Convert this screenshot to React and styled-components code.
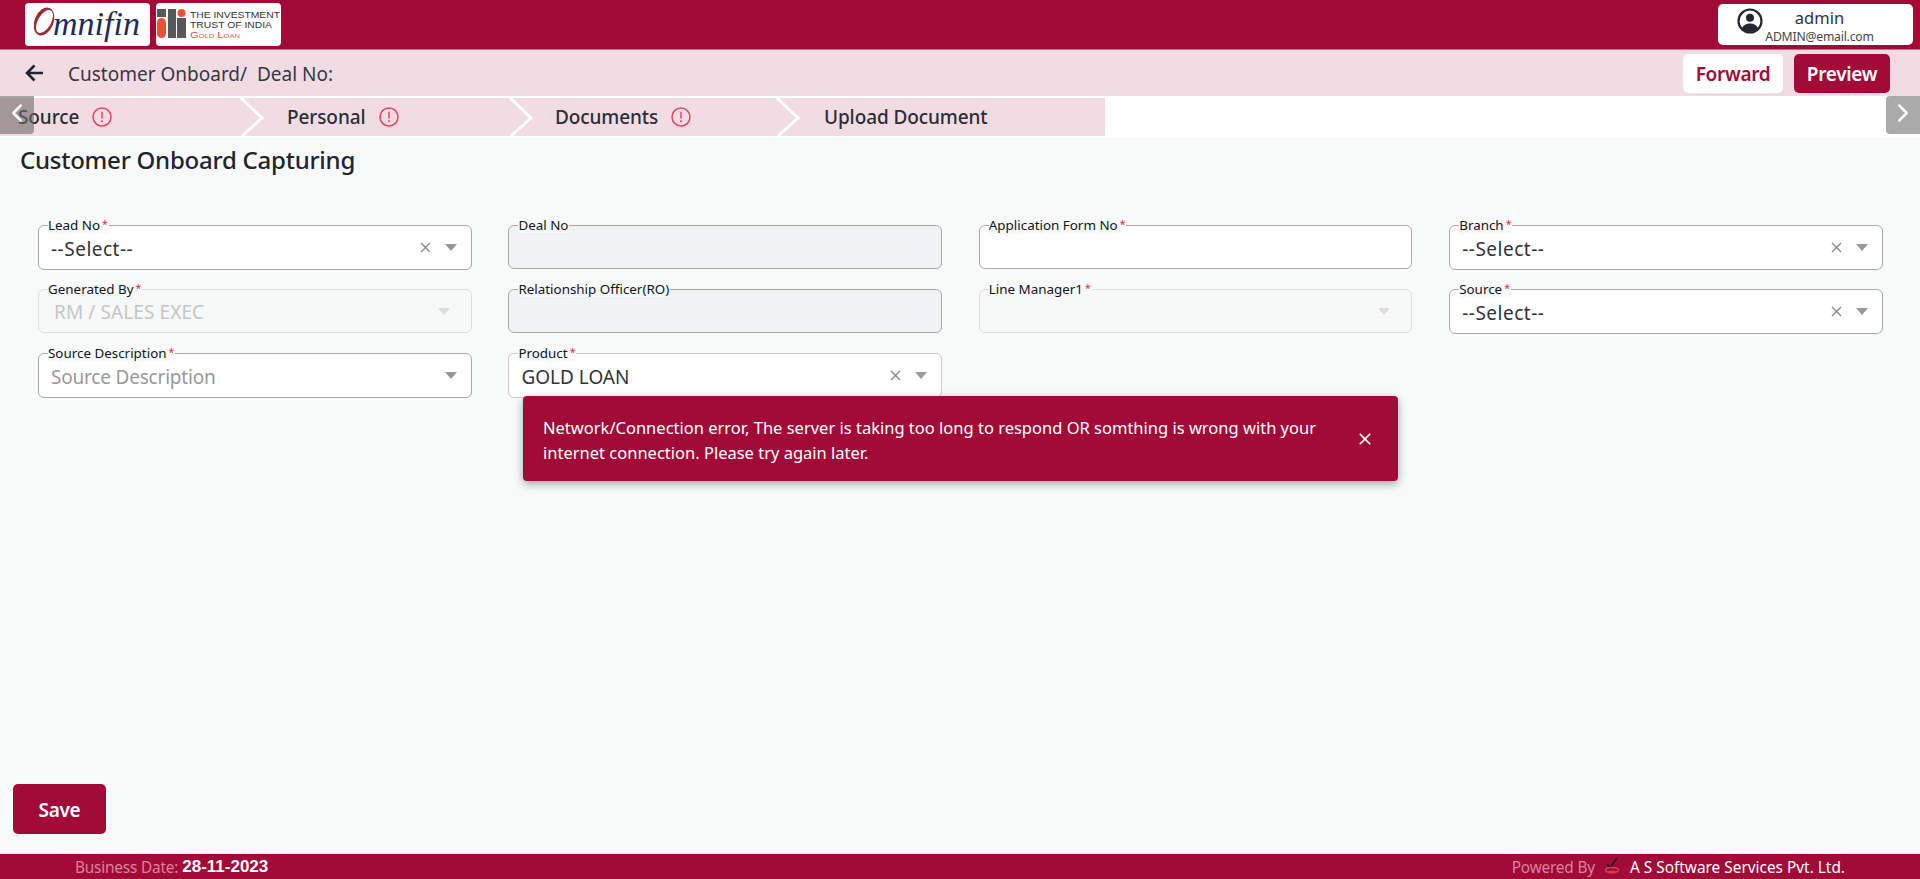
import React from "react";
import styled, { createGlobalStyle } from "styled-components";
import { MdClose } from "react-icons/md";
import { LuChevronLeft, LuChevronRight } from "react-icons/lu";

const maroon = "#a20a38";
const pink = "#f2dce3";
const UI = `"Noto Sans", "Open Sans", sans-serif`;

const Global = createGlobalStyle`
  * { box-sizing: border-box; }
  html, body { margin: 0; padding: 0; background: #f8fafa; }
  body { font-family: ${UI}; overflow: hidden; }
`;

const Page = styled.div`
  position: relative;
  height: 879px;
  display: flex;
  flex-direction: column;
  background: #f8fafa;
`;

const Header = styled.header`
  height: 50px;
  flex: none;
  background: ${maroon};
  border-bottom: 1px solid #c4708a;
  display: flex;
  align-items: flex-start;
  justify-content: space-between;
  padding: 3px 7px 0 25px;
`;
const Logos = styled.div`
  display: flex;
  gap: 6px;
`;
const LogoCard = styled.div`
  width: 125px;
  height: 43px;
  background: #fff;
  border-radius: 4px;
  overflow: hidden;
  svg { display: block; }
`;
const UserBox = styled.div`
  width: 195px;
  height: 41px;
  margin-top: 1px;
  background: #fff;
  border-radius: 5px;
  display: flex;
  padding-left: 19px;
  color: #333;
  overflow: hidden;
`;
const UserText = styled.div`
  flex: 1;
  display: flex;
  flex-direction: column;
  align-items: center;
  padding-right: 37px;
  padding-top: 3px;
`;
const UserName = styled.div`
  font-size: 16.5px;
  line-height: 22px;
`;
const UserMail = styled.div`
  font-size: 12.2px;
  line-height: 16px;
  color: #444;
  letter-spacing: -0.2px;
`;

const SubBar = styled.div`
  height: 46px;
  flex: none;
  background: ${pink};
  display: flex;
  align-items: center;
  padding: 0 30px 0 25px;
`;
const BackIcon = styled.svg`
  display: block;
  width: 18px;
  height: 18px;
  margin-right: 25px;
`;
const Crumb = styled.div`
  flex: 1;
  font-size: 19px;
  color: #333845;
  white-space: pre;
  padding-top: 2px;
`;
const BarButton = styled.button`
  height: 39px;
  width: ${(p) => p.$w}px;
  margin-left: ${(p) => p.$ml || 0}px;
  border: 0;
  border-radius: 5px;
  font-family: ${UI};
  font-size: 19px;
  font-weight: 600;
  letter-spacing: -0.3px;
  background: ${(p) => (p.$solid ? maroon : "#fff")};
  color: ${(p) => (p.$solid ? "#fff" : maroon)};
  padding: 1px 0 0;
`;

const Stepper = styled.div`
  position: relative;
  flex: none;
  height: 41px;
  background: #fff;
  padding-top: 2px;
`;
const Band = styled.div`
  width: 1105px;
  height: 38px;
  background: ${pink};
  display: flex;
`;
const Step = styled.div`
  position: relative;
  flex: ${(p) => (p.$last ? "1" : `0 0 ${p.$w}px`)};
  display: flex;
  align-items: center;
  gap: 13px;
  padding-left: ${(p) => p.$pl}px;
  font-size: 19px;
  font-weight: 500;
  letter-spacing: -0.1px;
  color: #2b2e33;
`;
const Chevron = styled.svg`
  position: absolute;
  top: 0;
  right: -24px;
  width: 26px;
  height: 38px;
  z-index: 1;
`;
const Scroll = styled.div`
  position: absolute;
  top: 0;
  ${(p) => (p.$right ? "right: 0;" : "left: 0;")}
  width: 34px;
  height: 38px;
  background: ${(p) => (p.$right ? "#aaaaaa" : "rgba(110,105,105,0.6)")};
  border-radius: ${(p) => (p.$right ? "4px 0 0 4px" : "0 0 4px 0")};
  color: #fff;
  display: flex;
  align-items: center;
  justify-content: center;
  z-index: 2;
  font-size: 30px;
  padding-bottom: 4px;
`;

const Content = styled.main`
  flex: 1;
  display: flex;
  flex-direction: column;
  padding: 0 0 20px;
`;
const Title = styled.h1`
  margin: 6px 0 0 20px;
  font-size: 24px;
  line-height: 34px;
  font-weight: 500;
  letter-spacing: -0.24px;
  color: #20242c;
`;
const FormGrid = styled.div`
  display: grid;
  grid-template-columns: repeat(4, 433.5px);
  column-gap: 36.9px;
  row-gap: 19px;
  padding: 48px 0 0 38px;
`;
const Field = styled.div`
  position: relative;
  height: ${(p) => p.$h || 45}px;
  border: 1px solid ${(p) => p.$border || "#a8a8a8"};
  border-radius: 6px;
  background: ${(p) => p.$bg || "#fff"};
  display: flex;
  align-items: center;
  padding: 0 ${(p) => p.$pr || 14}px 0 ${(p) => p.$pl || 12}px;
`;
const Label = styled.label`
  position: absolute;
  left: 9px;
  top: -8px;
  font-size: 13.4px;
  line-height: 15px;
  color: #101418;
  background: #f8fafa;
  white-space: nowrap;
  padding-right: 1px;
`;
const Star = styled.span`
  color: #f5203f;
  margin-left: 2px;
  font-size: 10.5px;
  position: relative;
  top: -2px;
`;
const Value = styled.div`
  flex: 1;
  font-size: 19px;
  letter-spacing: ${(p) => p.$ls || 0}px;
  color: ${(p) => p.$color || "#333"};
  padding-top: 2px;
`;
const ClearIcon = styled(MdClose)`
  font-size: 17px;
  color: #8a8a8a;
  margin-right: 11px;
`;
const Caret = styled.span`
  width: 0;
  height: 0;
  border-left: 6.5px solid transparent;
  border-right: 6.5px solid transparent;
  border-top: 7px solid ${(p) => p.$color || "#999"};
`;

const Toast = styled.div`
  position: absolute;
  left: 523px;
  top: 396px;
  width: 875px;
  height: 85px;
  background: ${maroon};
  border-radius: 4px;
  box-shadow: 0 3px 8px rgba(0, 0, 0, 0.35);
  color: #fff;
  display: flex;
  align-items: center;
  padding: 0 23px 0 20px;
  z-index: 5;
`;
const ToastText = styled.div`
  flex: 1;
  font-size: 16.5px;
  line-height: 25px;
  padding-top: 2px;
`;
const ToastClose = styled(MdClose)`
  font-size: 20px;
  flex: none;
  margin-left: 30px;
`;

const SaveButton = styled.button`
  margin: auto 0 0 13px;
  width: 93px;
  height: 50px;
  border: 0;
  border-radius: 5px;
  background: ${maroon};
  color: #fff;
  font-family: ${UI};
  font-size: 19px;
  font-weight: 600;
  letter-spacing: -0.3px;
  padding: 2px 0 0;
`;

const Footer = styled.footer`
  height: 25px;
  flex: none;
  background: ${maroon};
  display: flex;
  align-items: center;
  justify-content: space-between;
  padding: 1px 75px 0;
  font-size: 15.4px;
`;
const FootGroup = styled.div`
  display: flex;
  align-items: center;
`;
const Muted = styled.span`
  color: #d9849c;
  letter-spacing: -0.2px;
`;
const DateText = styled.b`
  font-family: "Liberation Sans", Arial, sans-serif;
  color: #fff;
  margin-left: 4px;
  font-size: 17px;
`;
const Company = styled.span`
  color: #fff;
`;
const PoweredIcon = styled.svg`
  margin: 0 10px 0 9px;
  display: block;
`;

const AlertIcon = () => (
  <svg width="20" height="20" viewBox="0 0 20 20" fill="none">
    <circle cx="10" cy="10" r="9" stroke="#e8435f" strokeWidth="1.5" />
    <path d="M10 4.8v6.6" stroke="#e8435f" strokeWidth="1.5" />
    <circle cx="10" cy="14.2" r="1" fill="#e8435f" />
  </svg>
);

const StepChevron = () => (
  <Chevron viewBox="0 0 26 38" fill="none">
    <path d="M1 0 L22 20 L2 38" stroke="#fff" strokeWidth="3" />
  </Chevron>
);

const UserIcon = () => (
  <svg width="26" height="26" viewBox="0 0 26 26" style={{ marginTop: 4 }}>
    <circle cx="13" cy="13" r="11.5" fill="none" stroke="#24272e" strokeWidth="2.2" />
    <circle cx="13" cy="9.8" r="4" fill="#24272e" />
    <path d="M5 20c2-3.6 5-4.6 8-4.6s6 1 8 4.6c-2 2.4-5 4-8 4s-6-1.6-8-4z" fill="#24272e" />
  </svg>
);

const OmnifinLogo = () => (
  <svg width="125" height="43" viewBox="0 0 125 43">
    <ellipse cx="19" cy="18.5" rx="9.5" ry="14.5" transform="rotate(22 19 18.5)" fill="#9c2a30" />
    <ellipse cx="19.5" cy="18.5" rx="6.6" ry="12.6" transform="rotate(30 19.5 18.5)" fill="#fff" />
    <text x="28" y="32" fontFamily="Liberation Serif, serif" fontStyle="italic" fontSize="34" fill="#1f2b5c">mnifin</text>
  </svg>
);

const TrustLogo = () => (
  <svg width="125" height="43" viewBox="0 0 125 43">
    <rect x="1" y="6" width="9" height="8" fill="#58585a" />
    <rect x="1" y="15" width="9" height="20" rx="4.5" fill="#f04e37" />
    <rect x="12" y="6" width="8" height="29" fill="#58585a" />
    <circle cx="25.5" cy="10" r="4" fill="#f04e37" />
    <rect x="21" y="15" width="9" height="20" fill="#58585a" />
    <text x="34" y="15" fontFamily="Liberation Sans, sans-serif" fontSize="8.8" fill="#333" textLength="90" lengthAdjust="spacingAndGlyphs">THE INVESTMENT</text>
    <text x="34" y="25" fontFamily="Liberation Sans, sans-serif" fontSize="8.8" fill="#333" textLength="82" lengthAdjust="spacingAndGlyphs">TRUST OF INDIA</text>
    <text x="34" y="35" fontFamily="Liberation Sans, sans-serif" fontSize="8.8" fill="#f04e37" fontVariant="small-caps" textLength="50" lengthAdjust="spacingAndGlyphs">Gold Loan</text>
  </svg>
);

const SelectField = ({ label, required, value, placeholder, clear, border, ls }) => (
  <Field $border={border}>
    <Label>
      {label}
      {required && <Star>*</Star>}
    </Label>
    <Value $ls={ls} $color={placeholder ? "#999" : undefined}>{value}</Value>
    {clear && <ClearIcon />}
    <Caret />
  </Field>
);

const TextField = ({ label, required, disabled }) => (
  <Field $bg={disabled ? "#f1f2f4" : "#fff"} $h={44}>
    <Label>
      {label}
      {required && <Star>*</Star>}
    </Label>
  </Field>
);

const DisabledSelect = ({ label, value }) => (
  <Field $border="#dedede" $bg="#f7f8f8" $h={44} $pl={15} $pr={21}>
    <Label>
      {label}
      <Star>*</Star>
    </Label>
    <Value $ls={0.1} $color="#c6c6c6">{value}</Value>
    <Caret $color="#dcdcdc" />
  </Field>
);

const steps = [
  { name: "Source", w: 242, pl: 18, alert: true },
  { name: "Personal", w: 269, pl: 45, alert: true },
  { name: "Documents", w: 267, pl: 44, alert: true },
  { name: "Upload Document", pl: 46, last: true },
];

export default function App() {
  return (
    <Page>
      <Global />
      <Header>
        <Logos>
          <LogoCard>
            <OmnifinLogo />
          </LogoCard>
          <LogoCard>
            <TrustLogo />
          </LogoCard>
        </Logos>
        <UserBox>
          <UserIcon />
          <UserText>
            <UserName>admin</UserName>
            <UserMail>ADMIN@email.com</UserMail>
          </UserText>
        </UserBox>
      </Header>
      <SubBar>
        <BackIcon viewBox="0 0 18 18" fill="none">
          <path d="M18 9H2M9.5 1.5L2 9l7.5 7.5" stroke="#1f2430" strokeWidth="2.6" />
        </BackIcon>
        <Crumb>Customer Onboard/  Deal No:</Crumb>
        <BarButton $w={100}>Forward</BarButton>
        <BarButton $w={96} $ml={11} $solid>
          Preview
        </BarButton>
      </SubBar>
      <Stepper>
        <Band>
          {steps.map((s) => (
            <Step key={s.name} $w={s.w} $pl={s.pl} $last={s.last}>
              {s.name}
              {s.alert && <AlertIcon />}
              {!s.last && <StepChevron />}
            </Step>
          ))}
        </Band>
        <Scroll>
          <LuChevronLeft />
        </Scroll>
        <Scroll $right>
          <LuChevronRight />
        </Scroll>
      </Stepper>
      <Content>
        <Title>Customer Onboard Capturing</Title>
        <FormGrid>
          <SelectField label="Lead No" required value="--Select--" clear ls={0.5} />
          <TextField label="Deal No" disabled />
          <TextField label="Application Form No" required />
          <SelectField label="Branch" required value="--Select--" clear ls={0.5} />
          <DisabledSelect label="Generated By" value="RM / SALES EXEC" />
          <TextField label="Relationship Officer(RO)" disabled />
          <DisabledSelect label="Line Manager1" value="" />
          <SelectField label="Source" required value="--Select--" clear ls={0.5} />
          <SelectField label="Source Description" required value="Source Description" placeholder ls={-0.2} />
          <SelectField label="Product" required value="GOLD LOAN" clear border="#cccccc" />
        </FormGrid>
        <SaveButton>Save</SaveButton>
      </Content>
      <Toast>
        <ToastText>
          Network/Connection error, The server is taking too long to respond OR somthing is wrong with your internet
          connection. Please try again later.
        </ToastText>
        <ToastClose />
      </Toast>
      <Footer>
        <FootGroup>
          <Muted>Business Date:</Muted>
          <DateText>28-11-2023</DateText>
        </FootGroup>
        <FootGroup>
          <Muted>Powered By</Muted>
          <PoweredIcon width="16" height="20" viewBox="0 0 16 20" fill="none">
            <path d="M3 7l3 4 7-10" stroke="#1a1a1a" strokeWidth="1.6" />
            <ellipse cx="8" cy="13" rx="6.5" ry="2.5" stroke="#d0404f" strokeWidth="1.5" />
            <ellipse cx="8" cy="15" rx="4" ry="1.5" fill="#d0404f" />
          </PoweredIcon>
          <Company>A S Software Services Pvt. Ltd.</Company>
        </FootGroup>
      </Footer>
    </Page>
  );
}
